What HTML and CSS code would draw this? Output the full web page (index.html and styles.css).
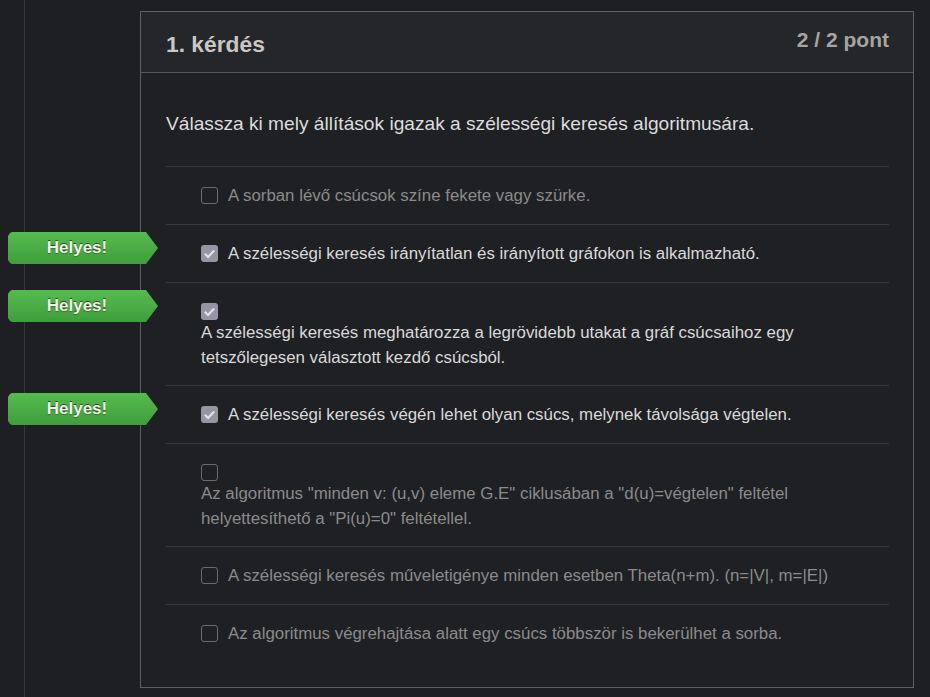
FILE: index.html
```html
<!DOCTYPE html>
<html lang="hu">
<head>
<meta charset="utf-8">
<title>1. kérdés</title>
<link rel="stylesheet" href="styles.css">
</head>
<body>
<div class="page">
  <div class="rail"></div>
  <main class="main">
    <section class="panel">
      <header class="panel-head">
        <h2 class="title">1. kérdés</h2>
        <span class="score">2 / 2 pont</span>
      </header>
      <div class="panel-body">
        <p class="question">Válassza ki mely állítások igazak a szélességi keresés algoritmusára.</p>
        <ul class="answers">
          <li class="answer">
            <span class="box"></span><span class="label">A sorban lévő csúcsok színe fekete vagy szürke.</span>
          </li>
          <li class="answer checked">
            <span class="badge">Helyes!</span>
            <span class="box"><svg viewBox="0 0 16 16" width="16" height="16"><path d="M3.6 8.3 L6.6 11.2 L12.4 5.2" fill="none" stroke="#e4e3ea" stroke-width="2"/></svg></span><span class="label">A szélességi keresés irányítatlan és irányított gráfokon is alkalmazható.</span>
          </li>
          <li class="answer checked multi">
            <span class="badge">Helyes!</span>
            <span class="box"><svg viewBox="0 0 16 16" width="16" height="16"><path d="M3.6 8.3 L6.6 11.2 L12.4 5.2" fill="none" stroke="#e4e3ea" stroke-width="2"/></svg></span><span class="label">A szélességi keresés meghatározza a legrövidebb utakat a gráf csúcsaihoz egy tetszőlegesen választott kezdő csúcsból.</span>
          </li>
          <li class="answer checked">
            <span class="badge">Helyes!</span>
            <span class="box"><svg viewBox="0 0 16 16" width="16" height="16"><path d="M3.6 8.3 L6.6 11.2 L12.4 5.2" fill="none" stroke="#e4e3ea" stroke-width="2"/></svg></span><span class="label">A szélességi keresés végén lehet olyan csúcs, melynek távolsága végtelen.</span>
          </li>
          <li class="answer multi">
            <span class="box"></span><span class="label">Az algoritmus "minden v: (u,v) eleme G.E" ciklusában a "d(u)=végtelen" feltétel helyettesíthető a "Pi(u)=0" feltétellel.</span>
          </li>
          <li class="answer">
            <span class="box"></span><span class="label">A szélességi keresés műveletigénye minden esetben Theta(n+m). (n=|V|, m=|E|)</span>
          </li>
          <li class="answer">
            <span class="box"></span><span class="label">Az algoritmus végrehajtása alatt egy csúcs többször is bekerülhet a sorba.</span>
          </li>
        </ul>
      </div>
    </section>
  </main>
</div>
</body>
</html>
```
FILE: styles.css
```css
* { box-sizing: border-box; }
html, body {
  margin: 0;
  padding: 0;
  background: #1e1f22;
  height: 100%;
}
body {
  font-family: "Liberation Sans", Arial, sans-serif;
  color: #d6d6d6;
  overflow: hidden;
}
.page {
  display: flex;
  min-height: 697px;
}
.rail {
  width: 25px;
  border-right: 1px solid #35363a;
  flex: none;
}
.main {
  flex: 1;
  padding: 11px 16px 0 115px;
}
.panel {
  width: 774px;
  border: 1px solid #5e5f62;
  background: #1f2023;
}
.panel-head {
  display: flex;
  justify-content: space-between;
  align-items: flex-start;
  height: 61px;
  padding: 0 24px 0 25px;
  background: #252629;
  border-bottom: 1px solid #55565a;
}
.title {
  margin: 0;
  padding-top: 18px;
  font-size: 22.8px;
  line-height: 28px;
  font-weight: bold;
  color: #c9c8c6;
}
.score {
  padding-top: 16px;
  font-size: 21px;
  line-height: 24px;
  font-weight: bold;
  color: #a5a4a2;
}
.panel-body {
  padding: 39px 24px 25px 25px;
}
.question {
  margin: 0 0 30px;
  font-size: 19.15px;
  line-height: 24px;
  color: #dcdcdc;
}
.answers {
  list-style: none;
  margin: 0;
  padding: 0;
}
.answer {
  position: relative;
  border-top: 1px solid #37383b;
  padding: 17px 0 16px 35px;
  font-size: 16.85px;
  line-height: 24px;
  color: #8b8b8b;
}
.answer.checked { color: #dadada; }
.answer.multi { padding: 16px 0 15px 35px; }
.box {
  display: inline-block;
  width: 17px;
  height: 17px;
  vertical-align: -3px;
  margin-right: 10px;
  border: 1px solid #6b6b6d;
  border-radius: 3px;
}
.box svg { display: block; width: 17px; height: 17px; }
.checked .box {
  border: none;
  background: #9795a4;
}
.multi .box {
  display: block;
  margin: 4px 0 0;
}
.multi .label { display: block; line-height: 25px; }
.badge {
  position: absolute;
  left: -158px;
  top: 7px;
  width: 150px;
  height: 32px;
  padding-right: 12px;
  text-align: center;
  font-size: 17px;
  line-height: 31px;
  font-weight: bold;
  color: #f2f2e6;
  text-shadow: 0 -1px 0 rgba(0,0,0,0.55), 0 1px 1px rgba(0,0,0,0.3);
  background: linear-gradient(#55bb4f, #3f9e3c);
  clip-path: polygon(0 4px, 2px 1px, 4px 0, 138px 0, 150px 16px, 138px 32px, 4px 32px, 2px 31px, 0 28px);
}
```
